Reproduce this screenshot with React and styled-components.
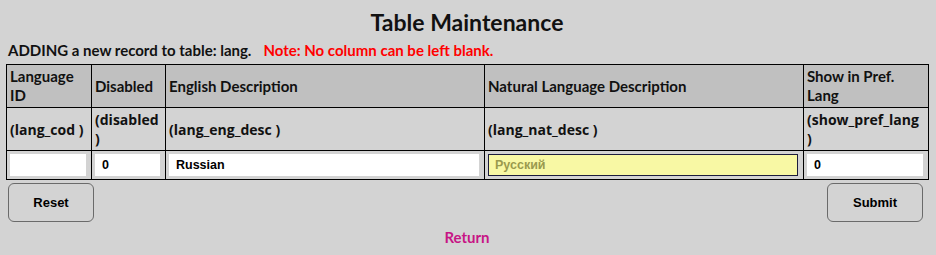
import React, { useState } from 'react';
import styled, { createGlobalStyle } from 'styled-components';

const GlobalStyle = createGlobalStyle`
    html, body {
        margin: 0;
        padding: 0;
        background: #d3d3d3;
        font-family: Lato, "Noto Sans", sans-serif;
        color: #111;
    }
`;

const Page = styled.div`
    padding: 6px 8px 0 6px;
    background: #d3d3d3;
    height: 255px;
    box-sizing: border-box;
`;

const Title = styled.h1`
    margin: 0;
    padding-top: 2px;
    font-size: 23px;
    font-weight: 700;
    text-align: center;
    line-height: 28px;
    color: #111;
`;

const Info = styled.div`
    display: flex;
    gap: 12px;
    padding: 4px 0 0 2px;
    font-size: 15px;
    font-weight: 700;
    line-height: 20px;
    height: 24px;
`;

const Note = styled.span`
    color: #ff0000;
`;

const Grid = styled.table`
    width: 922px;
    border-collapse: collapse;
    table-layout: fixed;
`;

const Head = styled.th`
    background: #c0c0c0;
    border: 1px solid #000;
    height: 42px;
    padding: 0 3px;
    text-align: left;
    font-size: 15px;
    font-weight: 700;
    line-height: 19px;
    vertical-align: middle;
`;

const Field = styled.td`
    border: 1px solid #000;
    height: 42px;
    padding: 0 4px 0 3px;
    font-family: "Open Sans", Lato, sans-serif;
    font-size: 14px;
    font-weight: 700;
    line-height: 19px;
    vertical-align: middle;
`;

const InputCell = styled.td`
    border: 1px solid #000;
    height: 28px;
    padding: 0 5px 0 3px;
    vertical-align: middle;
`;

const Input = styled.input`
    display: block;
    box-sizing: border-box;
    width: 100%;
    height: 22px;
    border: 1px solid ${p => (p.$focus ? '#1c1c3c' : '#ffffff')};
    outline: none;
    background: ${p => (p.$focus ? '#f8f8a4' : '#ffffff')};
    padding: 0 6px;
    font-family: "Liberation Sans", Arial, sans-serif;
    font-size: 12.5px;
    font-weight: 700;
    color: #000;
    &::placeholder {
        color: #9a9a4e;
    }
`;

const Actions = styled.div`
    display: flex;
    justify-content: space-between;
    padding: 3px 5px 0 2px;
`;

const Button = styled.button`
    width: ${p => p.$w}px;
    height: 39px;
    border: 1px solid #6a6a6a;
    border-radius: 6px;
    background: #d3d3d3;
    font-family: "Liberation Sans", Arial, sans-serif;
    font-size: 13px;
    font-weight: 700;
    color: #000;
    cursor: pointer;
`;

const Back = styled.a`
    display: block;
    margin-top: 6px;
    text-align: center;
    font-size: 15px;
    font-weight: 700;
    color: #c71585;
    text-decoration: none;
`;

const columns = [
    { width: 85, label: 'Language ID', name: '(lang_cod )', value: '' },
    { width: 74, label: 'Disabled', name: '(disabled )', value: '0' },
    { width: 319, label: 'English Description', name: '(lang_eng_desc )', value: 'Russian' },
    { width: 319, label: 'Natural Language Description', name: '(lang_nat_desc )', value: '', placeholder: 'Русский', focus: true },
    { width: 125, label: 'Show in Pref. Lang', name: '(show_pref_lang )', value: '0' },
];

export default function App() {
    const [values, setValues] = useState(columns.map(c => c.value));

    const handleChange = (i) => (e) => {
        const next = [...values];
        next[i] = e.target.value;
        setValues(next);
    };

    return (
        <>
            <GlobalStyle />
            <Page>
                <Title>Table Maintenance</Title>
                <Info>
                    <span>ADDING a new record to table: lang.</span>
                    <Note>Note: No column can be left blank.</Note>
                </Info>
                <Grid>
                    <colgroup>
                        {columns.map(c => <col key={c.label} style={{ width: c.width }} />)}
                    </colgroup>
                    <tbody>
                        <tr>
                            {columns.map(c => <Head key={c.label}>{c.label}</Head>)}
                        </tr>
                        <tr>
                            {columns.map(c => <Field key={c.name}>{c.name}</Field>)}
                        </tr>
                        <tr>
                            {columns.map((c, i) => (
                                <InputCell key={c.name}>
                                    <Input
                                        $focus={c.focus}
                                        value={values[i]}
                                        placeholder={c.placeholder}
                                        onChange={handleChange(i)}
                                    />
                                </InputCell>
                            ))}
                        </tr>
                    </tbody>
                </Grid>
                <Actions>
                    <Button $w={86} type="reset">Reset</Button>
                    <Button $w={96} type="submit">Submit</Button>
                </Actions>
                <Back href="#">Return</Back>
            </Page>
        </>
    );
}
